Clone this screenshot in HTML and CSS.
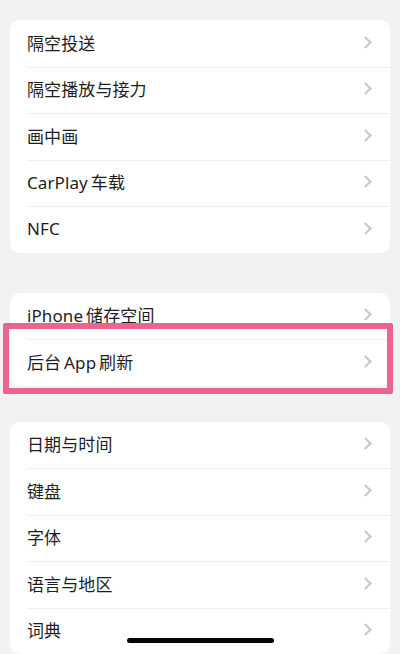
FILE: index.html
```html
<!DOCTYPE html>
<html lang="zh-CN">
<head>
  <meta charset="UTF-8" />
  <meta name="viewport" content="width=device-width, initial-scale=1.0"/>
  <title>通用</title>
  <link rel="stylesheet" href="styles.css">
</head>
<body>
  <div class="group first">
    <div class="row"><span>隔空投送</span><i class="chev"></i></div>
    <div class="row"><span>隔空播放与接力</span><i class="chev"></i></div>
    <div class="row"><span>画中画</span><i class="chev"></i></div>
    <div class="row"><span>CarPlay&thinsp;车载</span><i class="chev"></i></div>
    <div class="row"><span>NFC</span><i class="chev"></i></div>
  </div>

  <div class="group second">
    <div class="row"><span>iPhone&thinsp;储存空间</span><i class="chev"></i></div>
    <div class="row marked"><span>后台&thinsp;App&thinsp;刷新</span><i class="chev"></i></div>
  </div>

  <div class="group third">
    <div class="row"><span>日期与时间</span><i class="chev"></i></div>
    <div class="row"><span>键盘</span><i class="chev"></i></div>
    <div class="row"><span>字体</span><i class="chev"></i></div>
    <div class="row"><span>语言与地区</span><i class="chev"></i></div>
    <div class="row"><span>词典</span><i class="chev"></i></div>
  </div>

  <div class="home-bar"></div>
</body>
</html>
```

FILE: styles.css
```css
html, body {
  height: 100%;
}

body {
  margin: 0;
  padding: 20px 10px 0;
  background: #f2f2f5;
  font-family: "Noto Sans", "Noto Sans CJK SC", sans-serif;
  color: #1d1d1f;
  overflow: hidden;
  box-sizing: border-box;
}

.group {
  background: #fff;
  border-radius: 10px;
}

.second {
  margin-top: 40px;
}

.third {
  margin-top: 36px;
}

.row {
  position: relative;
  height: 46.5px;
  display: flex;
  align-items: center;
  justify-content: space-between;
  padding: 0 19px 2px 17px;
  box-sizing: border-box;
  font-size: 17px;
  letter-spacing: 0.1px;
}

.row + .row::before {
  content: "";
  position: absolute;
  top: 0;
  left: 17px;
  right: 0;
  border-top: 1px solid #efeff2;
}

.chev {
  width: 7px;
  height: 7px;
  border-top: 2px solid #c5c5ca;
  border-right: 2px solid #c5c5ca;
  transform: rotate(45deg);
  margin-right: 1px;
}

/* highlight frame around the refresh row */
.marked::after {
  content: "";
  position: absolute;
  left: -7px;
  right: -3px;
  top: -16px;
  bottom: -8px;
  border: 6px solid #e9648f;
  border-radius: 2px;
}

.home-bar {
  position: fixed;
  left: 127px;
  bottom: 11px;
  width: 147px;
  height: 5px;
  border-radius: 3px;
  background: #050505;
}
```
